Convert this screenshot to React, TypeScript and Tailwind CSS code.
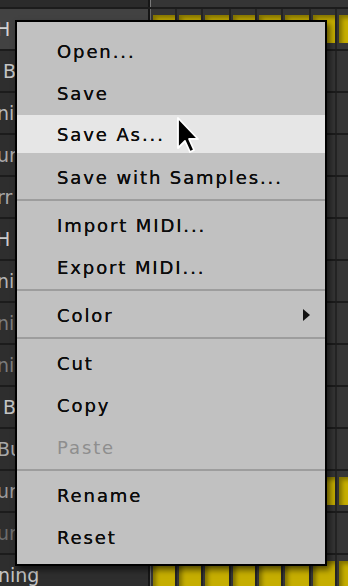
import { Fragment } from 'react';

type Cell = 'empty' | 'note' | 'stub';

interface TrackRow {
  label: string;
  tone: string;
  offset: string;
  selected?: boolean;
  cells: Cell[];
}

const E: Cell[] = ['empty', 'empty', 'empty', 'empty', 'empty', 'empty', 'empty', 'empty'];
const FULL: Cell[] = ['note', 'note', 'note', 'note', 'note', 'note', 'note', 'note'];

// rows of the pattern editor that sit behind the menu
const rows: TrackRow[] = [
  { label: 'H', tone: 'text-[#d2d2d2]', offset: '-ml-[4px]', selected: true, cells: FULL },
  { label: 'B', tone: 'text-[#c4c4c4]', offset: 'ml-[3px]', cells: E },
  { label: 'ni', tone: 'text-[#b8b8b8]', offset: '-ml-[3px]', cells: E },
  { label: 'ur', tone: 'text-[#a8a8a8]', offset: '-ml-[3px]', cells: E },
  { label: 'rr', tone: 'text-[#a8a8a8]', offset: '-ml-[3px]', cells: E },
  { label: 'H', tone: 'text-[#cacaca]', offset: '-ml-[4px]', cells: E },
  { label: 'ni', tone: 'text-[#b4b4b4]', offset: '-ml-[3px]', cells: ['empty', 'empty', 'empty', 'empty', 'empty', 'empty', 'empty', 'stub'] },
  { label: 'ni', tone: 'text-[#7c7c7c]', offset: '-ml-[3px]', cells: E },
  { label: 'ni', tone: 'text-[#7c7c7c]', offset: '-ml-[3px]', cells: E },
  { label: 'B', tone: 'text-[#c4c4c4]', offset: 'ml-[3px]', cells: E },
  { label: 'Bu', tone: 'text-[#a8a8a8]', offset: '-ml-[3px]', cells: E },
  { label: 'ur', tone: 'text-[#9a9a9a]', offset: '-ml-[3px]', cells: ['empty', 'empty', 'empty', 'empty', 'empty', 'empty', 'note', 'note'] },
  { label: 'ur', tone: 'text-[#6c6c6c]', offset: '-ml-[3px]', cells: E },
  { label: 'ning', tone: 'text-[#c4c4c4]', offset: '-ml-[2px]', cells: FULL },
];

const cellWidths = ['w-[26px]', 'w-[26px]', 'w-[28px]', 'w-[26px]', 'w-[26px]', 'w-[28px]', 'w-[26px]', 'w-[26px]'];

type MenuEntry = { label: string; disabled?: boolean; active?: boolean; submenu?: boolean } | 'sep';

const menu: MenuEntry[] = [
  { label: 'Open...' },
  { label: 'Save' },
  { label: 'Save As...', active: true },
  { label: 'Save with Samples...' },
  'sep',
  { label: 'Import MIDI...' },
  { label: 'Export MIDI...' },
  'sep',
  { label: 'Color', submenu: true },
  'sep',
  { label: 'Cut' },
  { label: 'Copy' },
  { label: 'Paste', disabled: true },
  'sep',
  { label: 'Rename' },
  { label: 'Reset' },
];

function GridCell({ kind, width }: { kind: Cell; width: string }) {
  return (
    <div className={`${width} h-full shrink-0 flex pl-[2px] py-[6px] border-r-2 border-[#242424]`}>
      {kind === 'note' && (
        <div className="flex-1 bg-[#c6ae00] shadow-[inset_3px_3px_4px_rgba(0,0,0,0.35)]" />
      )}
      {kind === 'stub' && (
        <div className="w-[17px] flex justify-end">
          <div className="w-[5px] border border-[#1c1c1c] bg-[#a99400]" />
        </div>
      )}
    </div>
  );
}

function Cursor() {
  return (
    <svg className="absolute left-[176px] top-[116px]" width="26" height="40" viewBox="0 0 13 20">
      <path
        d="M1 1 L1 16 L4.5 12.5 L7 18 L9 17 L6.5 11.5 L11 11.5 Z"
        fill="#000"
        stroke="#fff"
        strokeWidth="0.9"
        strokeLinejoin="round"
      />
    </svg>
  );
}

export default function App() {
  return (
    <div className="relative w-[348px] h-[586px] overflow-hidden bg-[#2e2e2e] font-['DejaVu_Sans',sans-serif]">
      {/* Pattern editor behind */}
      <div className="flex flex-col">
        <div className="h-[7px] flex">
          <div className="w-[148px] shrink-0 bg-[#2b2b2b]" />
          <div className="w-[2px] shrink-0 bg-[#161616]" />
          <div className="w-[1px] shrink-0 bg-[#7a7a7a]" />
          <div className="flex-1 bg-[#353535]" />
        </div>
        {rows.map((row, i) => (
          <div key={i} className="flex h-[42px] border-t-2 border-[#1c1c1c]">
            <div
              className={`w-[148px] shrink-0 h-full flex items-center overflow-hidden ${
                row.selected ? 'bg-[#424242]' : 'bg-[#2e2e2e]'
              }`}
            >
              <span className={`${row.offset} ${row.tone} text-[19px] leading-none whitespace-nowrap`}>
                {row.label}
              </span>
            </div>
            <div className="w-[2px] shrink-0 bg-[#161616]" />
            <div className="w-[1px] shrink-0 bg-[#6a6a6a]" />
            <div className="flex-1 flex overflow-hidden bg-[#353535]">
              {row.cells.map((c, j) => (
                <GridCell key={j} kind={c} width={cellWidths[j]} />
              ))}
            </div>
          </div>
        ))}
      </div>

      {/* Context menu */}
      <div className="absolute left-[15px] top-[20px] w-[312px] border-2 border-black bg-[#c1c1c1] pt-[8px] pb-[6px] shadow-[3px_4px_6px_rgba(0,0,0,0.55)]">
        {menu.map((item, i) =>
          item === 'sep' ? (
            <div key={i} className="mt-[1px] mb-[3px] h-[2px] bg-[#9d9d9d]" />
          ) : (
            <Fragment key={i}>
              <div
                className={`flex items-center justify-between pl-[40px] pr-[15px] text-[18px] tracking-[1.9px] ${
                  item.active ? 'mt-[1px] mb-[3px] h-[38px] bg-[#e6e6e6]' : 'h-[42px]'
                } ${item.disabled ? 'text-[#8e8e8e]' : 'text-[#0c0c0c]'}`}
              >
                <span className={item.disabled ? '' : '[text-shadow:0_0_0.4px_#000]'}>{item.label}</span>
                {item.submenu && (
                  <svg width="7" height="12" viewBox="0 0 7 12">
                    <polygon points="0,0 7,6 0,12" fill="#111" />
                  </svg>
                )}
              </div>
            </Fragment>
          )
        )}
      </div>

      <Cursor />
    </div>
  );
}
